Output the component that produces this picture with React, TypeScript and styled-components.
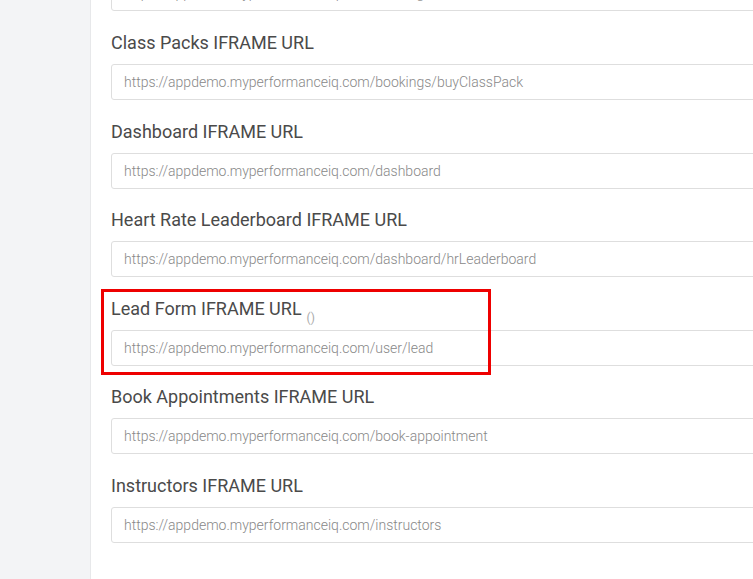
import styled, { createGlobalStyle } from "styled-components"

const fields = [
    { label: "Bookings IFRAME URL", url: "https://appdemo.myperformanceiq.com/bookings" },
    { label: "Class Packs IFRAME URL", url: "https://appdemo.myperformanceiq.com/bookings/buyClassPack" },
    { label: "Dashboard IFRAME URL", url: "https://appdemo.myperformanceiq.com/dashboard" },
    { label: "Heart Rate Leaderboard IFRAME URL", url: "https://appdemo.myperformanceiq.com/dashboard/hrLeaderboard" },
    { label: "Lead Form IFRAME URL", url: "https://appdemo.myperformanceiq.com/user/lead", hint: "()", highlighted: true },
    { label: "Book Appointments IFRAME URL", url: "https://appdemo.myperformanceiq.com/book-appointment" },
    { label: "Instructors IFRAME URL", url: "https://appdemo.myperformanceiq.com/instructors" },
]

export default function App() {
    return (
        <>
            <GlobalStyle />
            <Page>
                <Sidebar />
                <Main>
                    <Form>
                        {fields.map((item, index) => (
                            <Field key={index}>
                                <Label>
                                    {item.label}
                                    {item.hint && <Hint>{item.hint}</Hint>}
                                </Label>
                                <Input type="text" readOnly value={item.url} />
                                {item.highlighted && <Highlight />}
                            </Field>
                        ))}
                    </Form>
                </Main>
            </Page>
        </>
    )
}

const GlobalStyle = createGlobalStyle`
    html, body {
        margin: 0;
        height: 100%;
        overflow: hidden;
        background: #fff;
        font-family: Roboto, "Liberation Sans", sans-serif;
    }
`
const Page = styled.div`
    display: flex;
    min-height: 100vh;
`
const Sidebar = styled.aside`
    flex: 0 0 90px;
    background-color: #f3f4f6;
    border-right: 1px solid #e7e8ea;
`
const Main = styled.main`
    flex: 1;
    padding-left: 20px;
    overflow: hidden;
`
const Form = styled.div`
    width: 720px;
    margin-top: -56.6px;
`
const Field = styled.div`
    position: relative;
    margin-bottom: 20.6px;
`
const Label = styled.label`
    display: block;
    height: 21px;
    margin-bottom: 11px;
    font-size: 18px;
    line-height: 21px;
    color: #4a4a4a;
    white-space: nowrap;
`
const Hint = styled.span`
    margin-left: 5px;
    font-size: 12px;
    line-height: 1;
    color: #aaa;
    vertical-align: -7px;
`
const Input = styled.input`
    display: block;
    box-sizing: border-box;
    width: 100%;
    height: 36px;
    padding: 0 12px;
    border: 1px solid #dedede;
    border-radius: 3px;
    background: #fff;
    font-family: Roboto, "Liberation Sans", sans-serif;
    font-size: 14px;
    font-weight: 300;
    color: #888;
    outline: none;
`
const Highlight = styled.div`
    position: absolute;
    left: -10px;
    top: -9px;
    width: 390px;
    height: 86px;
    box-sizing: border-box;
    border: 3px solid #ee0000;
    pointer-events: none;
`
